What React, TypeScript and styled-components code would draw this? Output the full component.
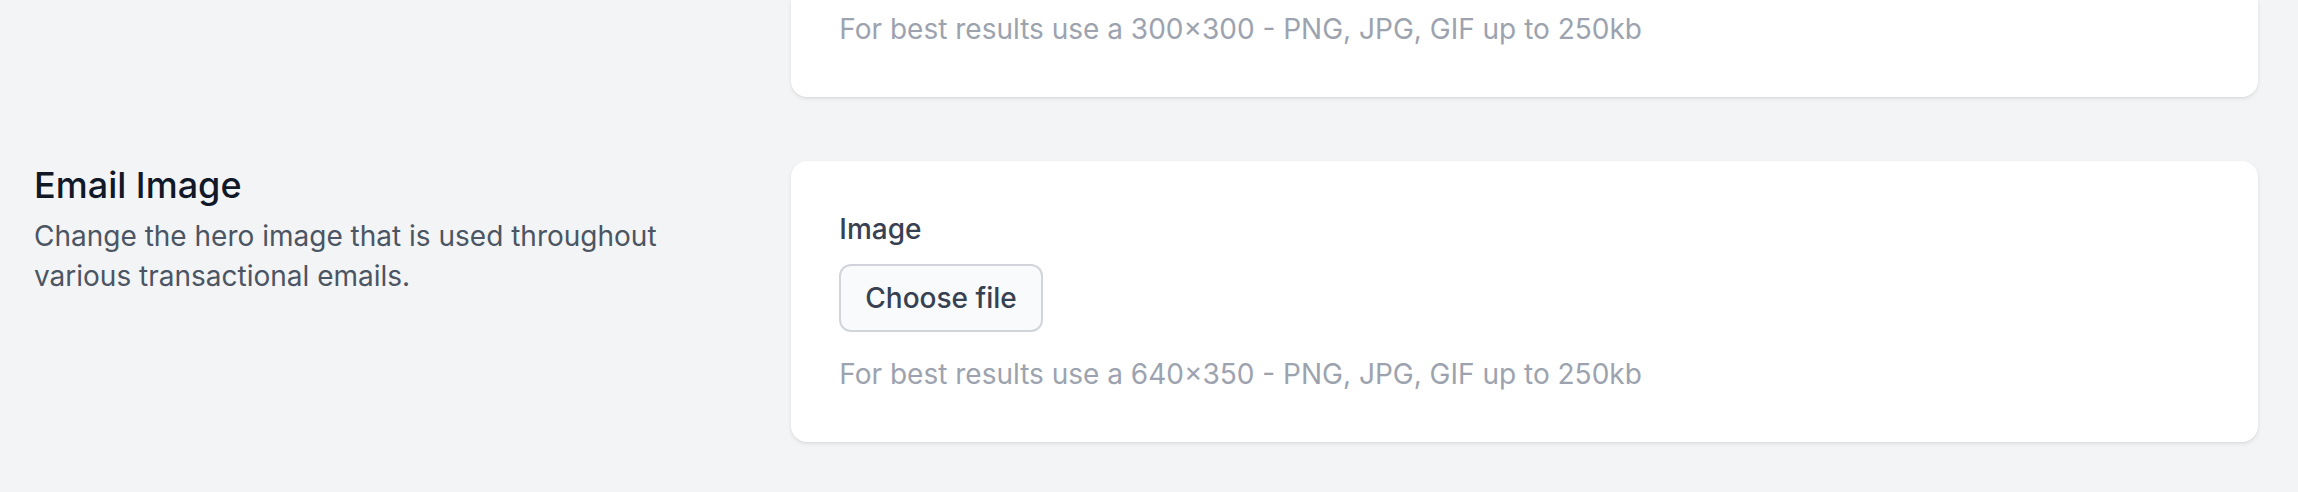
import React from "react";
import styled, { createGlobalStyle } from "styled-components";

const GlobalStyle = createGlobalStyle`
  html, body {
    margin: 0;
    padding: 0;
    background: #f3f4f6;
  }
  body {
    font-family: Inter, "Noto Sans", "Liberation Sans", sans-serif;
    -webkit-font-smoothing: antialiased;
  }
  * { box-sizing: border-box; }
`;

const Page = styled.main`
  min-height: 100vh;
  background: #f3f4f6;
  padding: 0 40px 51px 34px;
  display: flex;
  flex-direction: column;
  gap: 64px;
`;

const Section = styled.section`
  display: grid;
  grid-template-columns: repeat(3, minmax(0, 1fr));
  column-gap: 48px;
`;

const Aside = styled.div`
  grid-column: span 1;
`;

const Heading = styled.h3`
  margin: 0;
  font-size: 36px;
  line-height: 48px;
  font-weight: 500;
  color: #111827;
`;

const Description = styled.p`
  margin: 7px 0 0;
  font-size: 28px;
  line-height: 40px;
  color: #4b5563;
`;

const Card = styled.div<{ $clipped?: boolean }>`
  grid-column: span 2;
  background: #ffffff;
  border-radius: ${(p) => (p.$clipped ? "0 0 16px 16px" : "16px")};
  box-shadow: 0 2px 5px 0 rgba(0, 0, 0, 0.07), 0 1px 2px 0 rgba(0, 0, 0, 0.05);
  padding: ${(p) => (p.$clipped ? "9px 48px 48px" : "48px")};
  display: flex;
  flex-direction: column;
  align-items: flex-start;
`;

const Label = styled.label`
  font-size: 28px;
  line-height: 40px;
  font-weight: 500;
  color: #374151;
`;

const FileButton = styled.button`
  margin-top: 15px;
  font-family: inherit;
  font-size: 28px;
  line-height: 40px;
  font-weight: 500;
  color: #374151;
  background: #f9fafb;
  border: 2px solid #d1d5db;
  border-radius: 12px;
  padding: 12px 24px;
  cursor: pointer;
`;

const Hint = styled.p`
  margin: 22px 0 0;
  font-size: 28px;
  line-height: 40px;
  color: #9ca3af;
`;

const HintOnly = styled(Hint)`
  margin: 0;
`;

export default function App() {
  return (
    <>
      <GlobalStyle />
      <Page>
        <Section>
          <Aside />
          <Card $clipped>
            <HintOnly>For best results use a 300×300 - PNG, JPG, GIF up to 250kb</HintOnly>
          </Card>
        </Section>
        <Section>
          <Aside>
            <Heading>Email Image</Heading>
            <Description>
              Change the hero image that is used throughout various transactional emails.
            </Description>
          </Aside>
          <Card>
            <Label htmlFor="email-image">Image</Label>
            <FileButton id="email-image" type="button">
              Choose file
            </FileButton>
            <Hint>For best results use a 640×350 - PNG, JPG, GIF up to 250kb</Hint>
          </Card>
        </Section>
      </Page>
    </>
  );
}
